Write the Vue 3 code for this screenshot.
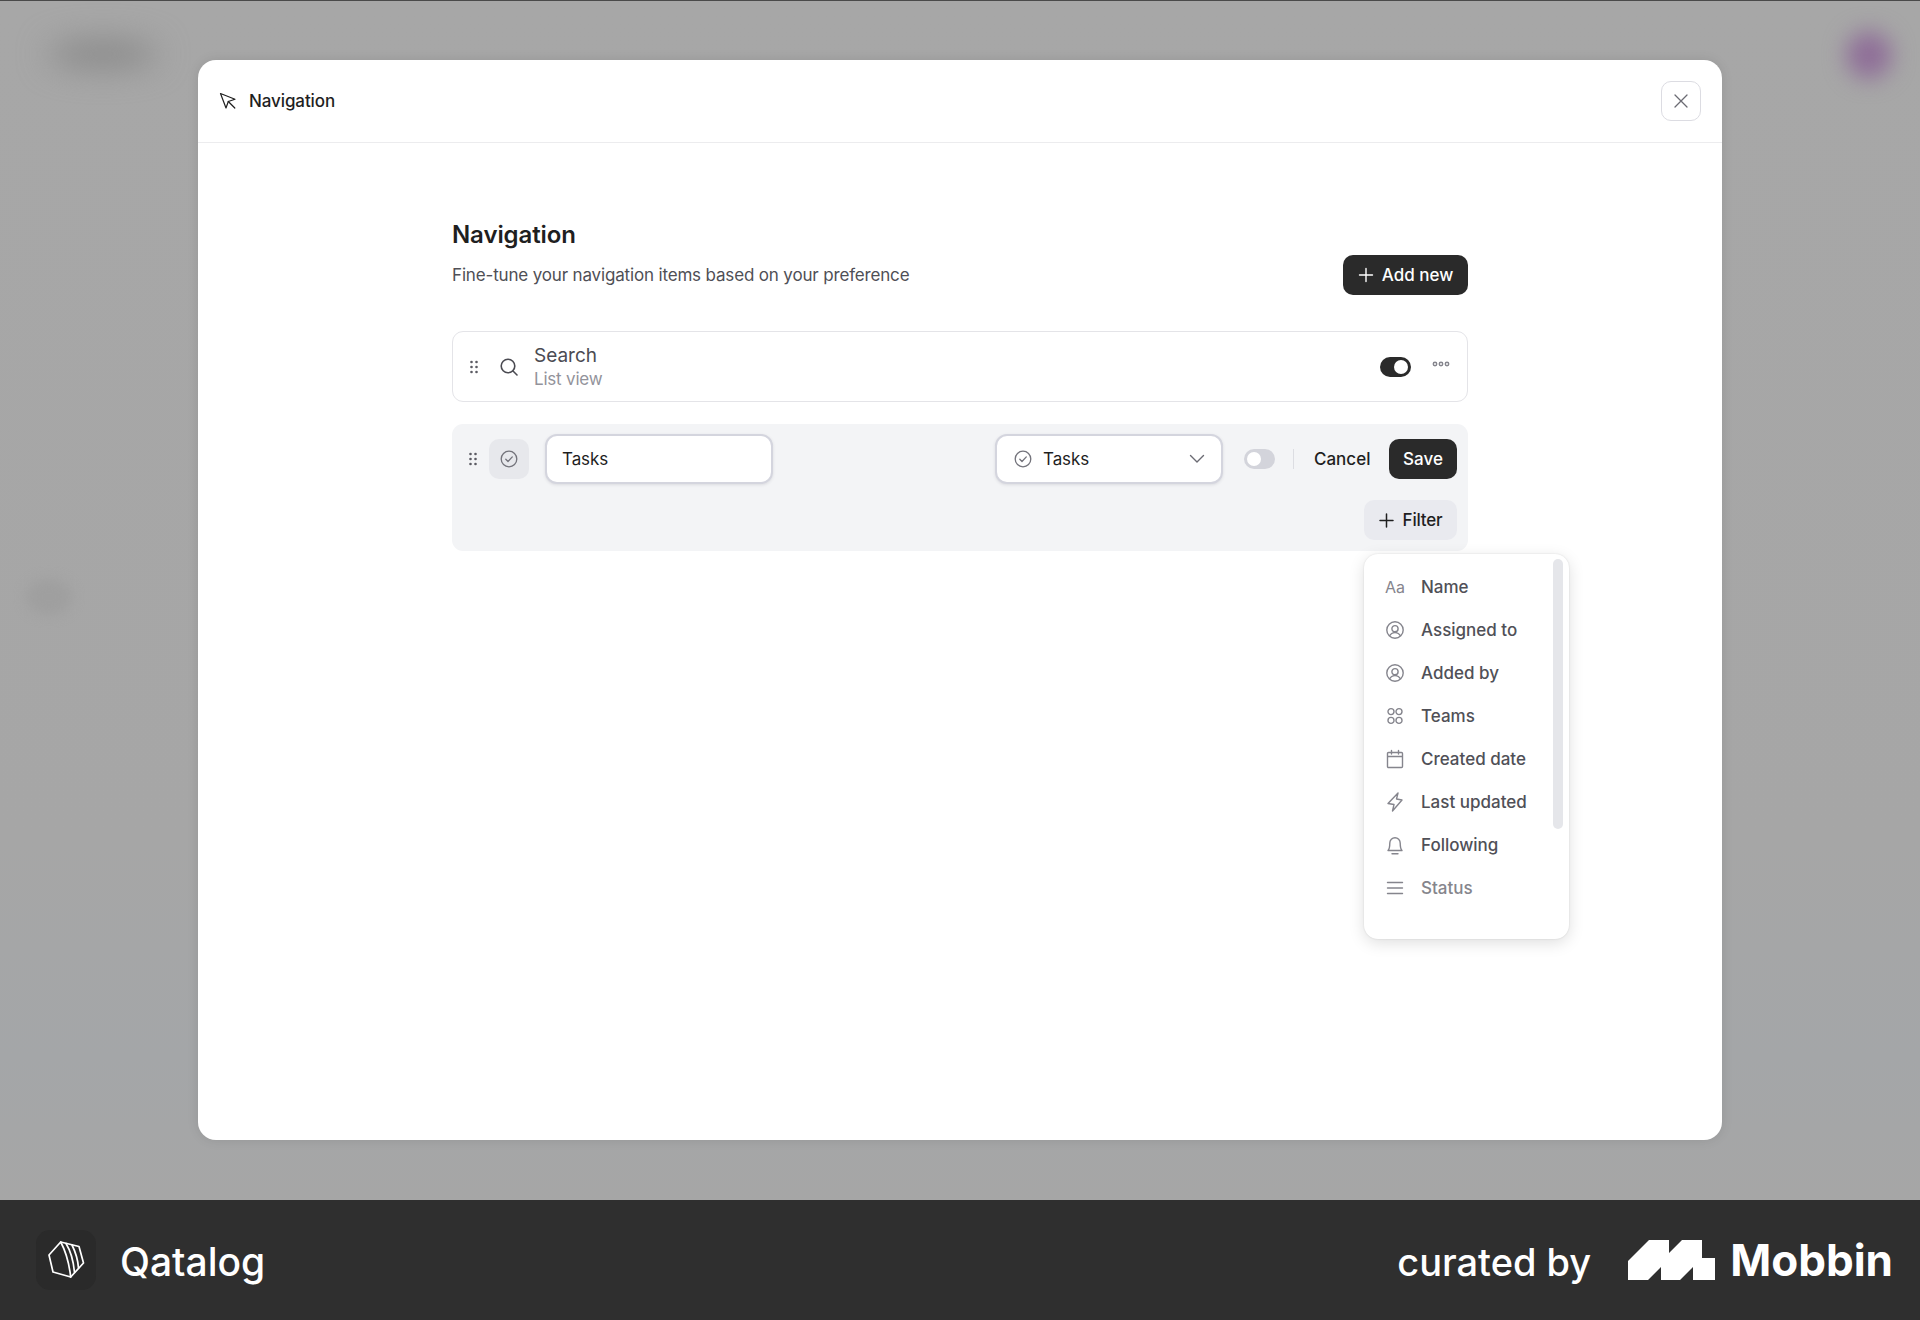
<script setup>
const filters = [
  { label: 'Name', icon: 'text' },
  { label: 'Assigned to', icon: 'user' },
  { label: 'Added by', icon: 'user' },
  { label: 'Teams', icon: 'teams' },
  { label: 'Created date', icon: 'calendar' },
  { label: 'Last updated', icon: 'bolt' },
  { label: 'Following', icon: 'bell' },
  { label: 'Status', icon: 'lines', faded: true }
]

const iconPaths = {
  user: 'M10 1.8a8.2 8.2 0 1 0 0 16.4a8.2 8.2 0 0 0 0-16.4z M10 5.6a3.1 3.1 0 1 0 0 6.2a3.1 3.1 0 0 0 0-6.2z M4.6 16c1-2.3 3-3.4 5.4-3.4s4.4 1.1 5.4 3.4',
  teams: 'M6 2.6a3 3 0 1 0 0 6a3 3 0 0 0 0-6z M14 2.6a3 3 0 1 0 0 6a3 3 0 0 0 0-6z M6 11.4a3 3 0 1 0 0 6a3 3 0 0 0 0-6z M14 11.4a3 3 0 1 0 0 6a3 3 0 0 0 0-6z',
  calendar: 'M3.5 3.5h13a1 1 0 0 1 1 1v13a1 1 0 0 1-1 1h-13a1 1 0 0 1-1-1v-13a1 1 0 0 1 1-1z M2.5 7.5h15 M6.5 1.5v3.5 M13.5 1.5v3.5',
  bolt: 'M13 1L3 11.5L9 12.5L7.5 19L17 8L11.5 7z',
  bell: 'M3 15.5c1.4-1.4 1.8-3.3 1.8-7.5a5.2 5.2 0 0 1 10.4 0c0 4.2.4 6.1 1.8 7.5z M7 18.7h6',
  lines: 'M2.5 4.5h15 M2.5 10h15 M2.5 15.5h15'
}

const dragDots = [[1.5, 2], [6.5, 2], [1.5, 7], [6.5, 7], [1.5, 12], [6.5, 12]]
</script>

<template>
  <div class="page">
    <div class="backdrop">
      <div class="blob blob-logo"></div>
      <div class="blob blob-avatar"></div>
      <div class="blob blob-side"></div>

      <div class="modal">
        <header class="modal-head">
          <div class="head-title">
            <svg class="cursor" viewBox="0 0 18 18" fill="none" stroke="#1f1f1f" stroke-width="1.2" stroke-linejoin="round" stroke-linecap="round">
              <path d="M1.5 1.5L7 16l2.3-6.5L16 7.2z" />
              <path d="M9.3 9.5l6.5 6.5" />
            </svg>
            <span>Navigation</span>
          </div>
          <button class="close-btn">
            <svg width="16" height="16" viewBox="0 0 16 16" fill="none" stroke="#6b6b73" stroke-width="1.3" stroke-linecap="round">
              <path d="M2 2l12 12M14 2L2 14" />
            </svg>
          </button>
        </header>

        <main class="modal-body">
          <div class="intro">
            <div>
              <h1>Navigation</h1>
              <p>Fine-tune your navigation items based on your preference</p>
            </div>
            <button class="dark-btn add-btn">
              <svg width="16" height="16" viewBox="0 0 16 16" fill="none" stroke="#fff" stroke-width="1.4" stroke-linecap="round">
                <path d="M8 1.5v13M1.5 8h13" />
              </svg>
              Add new
            </button>
          </div>

          <div class="nav-row">
            <svg class="drag" width="8" height="14" viewBox="0 0 8 14" fill="#5b5b63">
              <circle v-for="d in dragDots" :key="d.join()" :cx="d[0]" :cy="d[1]" r="1.3" />
            </svg>
            <svg class="search-icon" width="20" height="20" viewBox="0 0 20 20" fill="none" stroke="#4b4b52" stroke-width="1.6" stroke-linecap="round">
              <circle cx="9" cy="9" r="6.8" />
              <path d="M14 14l4 4" />
            </svg>
            <div class="nav-text">
              <span class="nav-name">Search</span>
              <span class="nav-sub">List view</span>
            </div>
            <div class="switch on"><i></i></div>
            <svg class="more" width="18" height="6" viewBox="0 0 18 6" fill="none" stroke="#85858d" stroke-width="1.5">
              <circle cx="3" cy="3" r="1.7" />
              <circle cx="9" cy="3" r="1.7" />
              <circle cx="15" cy="3" r="1.7" />
            </svg>
          </div>

          <div class="edit-panel">
            <div class="edit-row">
              <svg class="drag" width="8" height="14" viewBox="0 0 8 14" fill="#5b5b63">
                <circle v-for="d in dragDots" :key="d.join()" :cx="d[0]" :cy="d[1]" r="1.3" />
              </svg>
              <div class="icon-tile">
                <svg width="18" height="18" viewBox="0 0 18 18" fill="none" stroke="#73737b" stroke-width="1.3" stroke-linecap="round" stroke-linejoin="round">
                  <circle cx="9" cy="9" r="7.8" />
                  <path d="M5.8 9.3l2.2 2.2l4.3-4.6" />
                </svg>
              </div>
              <div class="field name-field">Tasks</div>
              <div class="field select-field">
                <svg width="18" height="18" viewBox="0 0 18 18" fill="none" stroke="#73737b" stroke-width="1.3" stroke-linecap="round" stroke-linejoin="round">
                  <circle cx="9" cy="9" r="7.8" />
                  <path d="M5.8 9.3l2.2 2.2l4.3-4.6" />
                </svg>
                <span>Tasks</span>
                <svg class="chevron" width="16" height="10" viewBox="0 0 16 10" fill="none" stroke="#6b6b73" stroke-width="1.4" stroke-linecap="round" stroke-linejoin="round">
                  <path d="M1.5 1.5L8 8l6.5-6.5" />
                </svg>
              </div>
              <div class="switch off"><i></i></div>
              <span class="divider"></span>
              <button class="cancel-btn">Cancel</button>
              <button class="dark-btn save-btn">Save</button>
            </div>
            <div class="filter-row">
              <button class="filter-btn">
                <svg width="15" height="15" viewBox="0 0 15 15" fill="none" stroke="#1f1f1f" stroke-width="1.5" stroke-linecap="round">
                  <path d="M7.5 1v13M1 7.5h13" />
                </svg>
                Filter
              </button>
            </div>
          </div>

          <div class="filter-menu">
            <div class="scroll-thumb"></div>
            <div v-for="f in filters" :key="f.label" class="menu-item" :class="{ faded: f.faded }">
              <span v-if="f.icon === 'text'" class="aa">Aa</span>
              <svg v-else width="20" height="20" viewBox="0 0 20 20" fill="none" stroke="#85858d" stroke-width="1.4" stroke-linecap="round" stroke-linejoin="round">
                <path :d="iconPaths[f.icon]" />
              </svg>
              <span>{{ f.label }}</span>
            </div>
          </div>
        </main>
      </div>
    </div>

    <footer class="credit">
      <div class="brand">
        <div class="brand-tile">
          <svg width="37" height="38" viewBox="0 0 37 38" fill="none" stroke="#fff" stroke-width="1.7" stroke-linejoin="round" stroke-linecap="round">
            <path d="M12.7 1L1 14l4 17l17.7 5c-1.7-15-5.7-27-10-35z" />
            <path d="M12.7 1L31 5.5l4.5 16.5L22.7 36" />
            <path d="M18 2.5c5 8 7.5 18 8.5 29" />
            <path d="M24 4c4 8 6 16 6.5 23" />
          </svg>
        </div>
        <span>Qatalog</span>
      </div>
      <div class="curated">
        <span class="curated-by">curated by</span>
        <svg width="87" height="40" viewBox="0 0 87 40" fill="#fff">
          <path d="M0 40h20l13-13v13h19l13-13v13h22V18H74V0H54L41 13V0H21L0 21z" />
        </svg>
        <span class="mobbin">Mobbin</span>
      </div>
    </footer>
  </div>
</template>

<style>
html, body {
  margin: 0;
  background: #a6a6a6;
}
</style>

<style scoped>
.page {
  width: 1920px;
  height: 1320px;
  display: flex;
  flex-direction: column;
  font-family: Inter, "Liberation Sans", sans-serif;
  color: #1f1f1f;
  overflow: hidden;
}
.backdrop {
  position: relative;
  height: 1200px;
  box-sizing: border-box;
  padding: 60px 198px;
  background: linear-gradient(180deg, #a7a7a7 0%, #a6a6a6 70%, #a4a6a8 88%, #a6a6a6 100%);
  border-top: 1px solid #4a4a4a;
  overflow: hidden;
}
.blob {
  position: absolute;
  border-radius: 50%;
}
.blob-logo {
  left: 48px;
  top: 40px;
  width: 110px;
  height: 26px;
  background: #878787;
  filter: blur(16px);
}
.blob-avatar {
  left: 1846px;
  top: 30px;
  width: 46px;
  height: 48px;
  background: #8f6f98;
  filter: blur(11px);
}
.blob-side {
  left: 26px;
  top: 578px;
  width: 46px;
  height: 36px;
  background: #9f9f9f;
  filter: blur(6px);
}
.modal {
  position: relative;
  height: 1080px;
  margin-top: -1px;
  background: #fff;
  border-radius: 18px;
  box-shadow: 0 0 12px rgba(0, 0, 0, 0.1);
}
.modal-head {
  height: 83px;
  box-sizing: border-box;
  padding: 0 21px;
  display: flex;
  align-items: center;
  justify-content: space-between;
  border-bottom: 1px solid #ececee;
}
.head-title {
  display: flex;
  align-items: center;
  gap: 12px;
  font-size: 17px;
  font-weight: 500;
  letter-spacing: -0.1px;
}
.cursor {
  width: 18px;
  height: 18px;
}
button {
  font-family: inherit;
  border: 0;
  cursor: pointer;
}
.close-btn {
  width: 40px;
  height: 40px;
  display: flex;
  align-items: center;
  justify-content: center;
  background: #fff;
  border: 1px solid #dcdce2;
  border-radius: 10px;
}
.modal-body {
  position: relative;
  padding: 76px 254px 0;
}
.intro {
  display: flex;
  align-items: flex-end;
  justify-content: space-between;
  margin-bottom: 36px;
}
.intro h1 {
  margin: 0 0 12px;
  font-size: 24px;
  line-height: 32px;
  font-weight: 600;
  letter-spacing: -0.1px;
}
.intro p {
  margin: 0 0 8px;
  font-size: 17px;
  line-height: 24px;
  letter-spacing: -0.16px;
  color: #4f4f56;
}
.dark-btn {
  background: #2a2a2a;
  color: #fff;
  border-radius: 10px;
  font-size: 17px;
  font-weight: 500;
}
.add-btn {
  width: 125px;
  height: 40px;
  display: flex;
  align-items: center;
  justify-content: center;
  gap: 8px;
}
.nav-row {
  height: 71px;
  box-sizing: border-box;
  display: flex;
  align-items: center;
  padding: 0 17px;
  border: 1px solid #e4e4e8;
  border-radius: 11px;
}
.search-icon {
  margin-left: 21px;
}
.nav-text {
  flex: 1;
  display: flex;
  flex-direction: column;
  margin-left: 15px;
}
.nav-name {
  font-size: 19px;
  line-height: 25px;
  color: #4b4b52;
}
.nav-sub {
  font-size: 17px;
  line-height: 23px;
  letter-spacing: -0.2px;
  color: #93939b;
}
.switch {
  width: 31px;
  height: 20px;
  box-sizing: border-box;
  padding: 3px;
  border-radius: 10px;
  display: flex;
}
.switch i {
  width: 14px;
  height: 14px;
  background: #fff;
  border-radius: 50%;
}
.switch.on {
  background: #2a2a2a;
  justify-content: flex-end;
}
.switch.off {
  background: #d3d4db;
  margin-left: 21px;
}
.more {
  margin-left: 21px;
  margin-top: -5px;
}
.edit-panel {
  margin-top: 22px;
  height: 127px;
  box-sizing: border-box;
  padding: 15px 11px 0 17px;
  background: #f3f4f6;
  border-radius: 11px;
}
.edit-row {
  display: flex;
  align-items: center;
  height: 40px;
}
.icon-tile {
  width: 40px;
  height: 40px;
  margin-left: 12px;
  display: flex;
  align-items: center;
  justify-content: center;
  background: #e7e8ec;
  border-radius: 10px;
}
.field {
  height: 50px;
  box-sizing: border-box;
  display: flex;
  align-items: center;
  background: #fff;
  border: 2px solid #d4d5de;
  border-radius: 12px;
  box-shadow: 0 1px 3px rgba(80, 80, 100, 0.15);
  font-size: 17px;
}
.name-field {
  width: 228px;
  margin-left: 16px;
  padding-left: 15px;
  letter-spacing: -0.1px;
}
.select-field {
  width: 228px;
  margin-left: 222px;
  padding: 0 16px 0 17px;
  gap: 11px;
  letter-spacing: -0.1px;
}
.chevron {
  margin-left: auto;
}
.divider {
  width: 1px;
  height: 20px;
  margin: 0 20px 0 18px;
  background: #dcdde2;
}
.cancel-btn {
  padding: 0;
  background: none;
  color: #1f1f1f;
  font-size: 17px;
  font-weight: 500;
}
.save-btn {
  width: 68px;
  height: 40px;
  margin-left: auto;
}
.filter-row {
  display: flex;
  justify-content: flex-end;
  margin-top: 21px;
}
.filter-btn {
  width: 93px;
  height: 40px;
  display: flex;
  align-items: center;
  justify-content: center;
  gap: 9px;
  background: #e9eaef;
  border-radius: 10px;
  color: #1f1f1f;
  font-size: 17px;
  font-weight: 500;
  letter-spacing: -0.2px;
}
.filter-menu {
  position: absolute;
  left: 1166px;
  top: 411px;
  width: 205px;
  height: 385px;
  box-sizing: border-box;
  padding: 11px 0 0 21px;
  background: #fff;
  border-radius: 14px;
  box-shadow: 0 0 2px rgba(0, 0, 0, 0.12), 0 4px 16px rgba(0, 0, 0, 0.13);
}
.scroll-thumb {
  position: absolute;
  right: 6px;
  top: 5px;
  width: 10px;
  height: 270px;
  background: #e5e6ea;
  border-radius: 5px;
}
.menu-item {
  height: 43.1px;
  display: flex;
  align-items: center;
  gap: 16px;
  font-size: 17px;
  font-weight: 500;
  color: #505057;
}
.menu-item.faded {
  color: #85858c;
}
.aa {
  width: 20px;
  font-size: 16px;
  font-weight: 400;
  color: #85858d;
  text-align: center;
}
.credit {
  height: 120px;
  flex: none;
  box-sizing: border-box;
  padding: 0 27px 0 36px;
  display: flex;
  align-items: center;
  justify-content: space-between;
  background: #2f2f2f;
  color: #fff;
}
.brand {
  display: flex;
  align-items: center;
  gap: 24px;
  font-size: 39px;
  font-weight: 500;
}
.brand span {
  padding-top: 3px;
}
.brand-tile {
  width: 60px;
  height: 60px;
  display: flex;
  align-items: center;
  justify-content: center;
  background: #2a2a2a;
  border-radius: 14px;
}
.curated {
  display: flex;
  align-items: center;
}
.curated-by {
  font-size: 38px;
  font-weight: 500;
  margin-right: 37px;
  padding-top: 3px;
}
.mobbin {
  margin-left: 15px;
  font-size: 44px;
  font-weight: 700;
}
</style>
